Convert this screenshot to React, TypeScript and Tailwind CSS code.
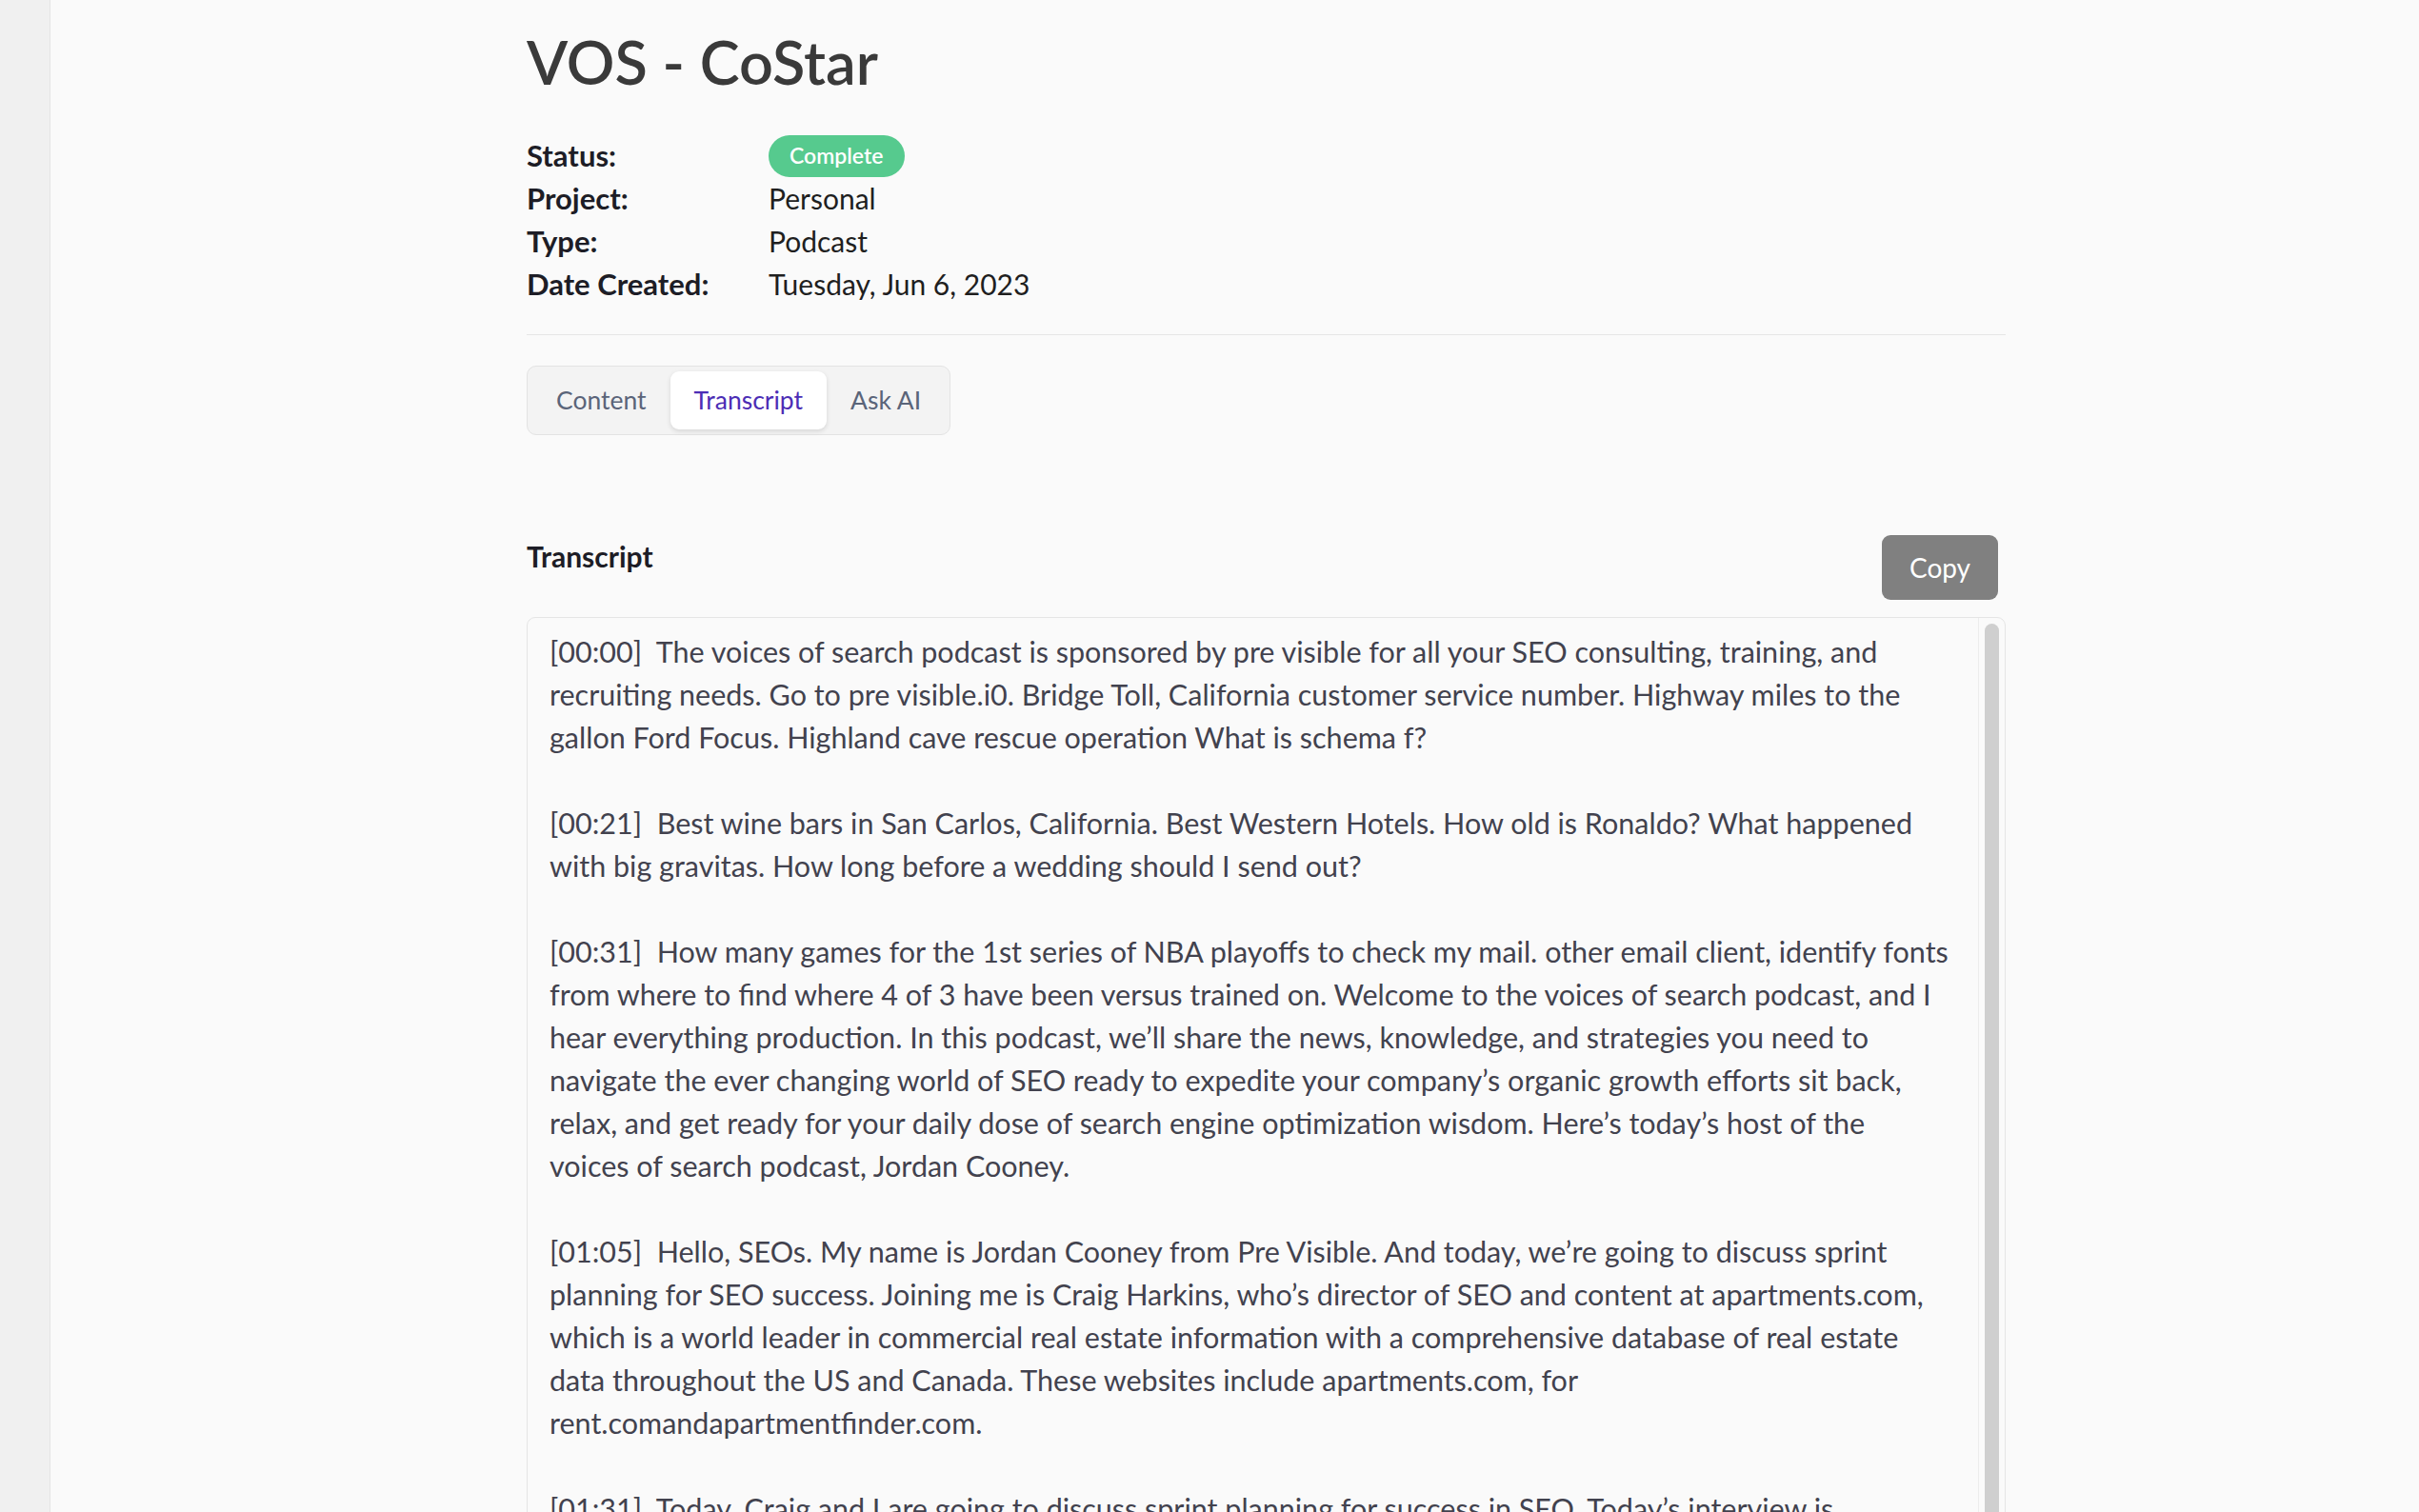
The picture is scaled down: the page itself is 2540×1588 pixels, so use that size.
import { useState } from 'react'

const meta: { label: string; value: string }[] = [
  { label: 'Project:', value: 'Personal' },
  { label: 'Type:', value: 'Podcast' },
  { label: 'Date Created:', value: 'Tuesday, Jun 6, 2023' },
]

const tabs = ['Content', 'Transcript', 'Ask AI']

const transcript: string[][] = [
  [
    '[00:00]  The voices of search podcast is sponsored by pre visible for all your SEO consulting, training, and',
    'recruiting needs. Go to pre visible.i0. Bridge Toll, California customer service number. Highway miles to the',
    'gallon Ford Focus. Highland cave rescue operation What is schema f?',
  ],
  [
    '[00:21]  Best wine bars in San Carlos, California. Best Western Hotels. How old is Ronaldo? What happened',
    'with big gravitas. How long before a wedding should I send out?',
  ],
  [
    '[00:31]  How many games for the 1st series of NBA playoffs to check my mail. other email client, identify fonts',
    'from where to find where 4 of 3 have been versus trained on. Welcome to the voices of search podcast, and I',
    'hear everything production. In this podcast, we\u2019ll share the news, knowledge, and strategies you need to',
    'navigate the ever changing world of SEO ready to expedite your company\u2019s organic growth efforts sit back,',
    'relax, and get ready for your daily dose of search engine optimization wisdom. Here\u2019s today\u2019s host of the',
    'voices of search podcast, Jordan Cooney.',
  ],
  [
    '[01:05]  Hello, SEOs. My name is Jordan Cooney from Pre Visible. And today, we\u2019re going to discuss sprint',
    'planning for SEO success. Joining me is Craig Harkins, who\u2019s director of SEO and content at apartments.com,',
    'which is a world leader in commercial real estate information with a comprehensive database of real estate',
    'data throughout the US and Canada. These websites include apartments.com, for',
    'rent.comandapartmentfinder.com.',
  ],
  [
    '[01:31]  Today, Craig and I are going to discuss sprint planning for success in SEO. Today\u2019s interview is',
    'going to be a little different. We\u2019re going to talk about how the team plans each sprint.',
  ],
]

export default function App() {
  const [tab, setTab] = useState('Transcript')

  return (
    <div
      className="flex min-h-screen bg-[#fafafa] text-[#1d1d26]"
      style={{ fontFamily: 'Lato, "Noto Sans", sans-serif' }}
    >
      <aside className="w-[53px] shrink-0 border-r border-[#e4e4e4] bg-[#f0f0f0]" />

      <main className="flex-1 pl-[500px] pt-[32px]">
        <div className="w-[1553px]">
          <h1 className="text-[63px] leading-[65px] font-semibold text-[#3a3a3a]">VOS - CoStar</h1>

          <div className="mt-[44px] border-b border-[#e6e6e6] pb-[30px]">
            <div className="flex h-[45px] items-center">
              <span className="w-[254px] text-[31px] font-bold">Status:</span>
              <span className="flex h-[44px] items-center rounded-full bg-[#56ca8e] px-[22px] text-[23px] font-semibold text-white">
                Complete
              </span>
            </div>
            {meta.map((m) => (
              <div key={m.label} className="flex h-[45px] items-center">
                <span className="w-[254px] text-[31px] font-bold">{m.label}</span>
                <span className="text-[30px] text-[#1f1f1f]">{m.value}</span>
              </div>
            ))}
          </div>

          <div className="mt-[32px] inline-flex rounded-[10px] border border-[#e3e3e3] bg-[#f3f3f3] p-[5px]">
            {tabs.map((t) => (
              <button
                key={t}
                onClick={() => setTab(t)}
                className={
                  t === tab
                    ? 'h-[61px] rounded-[9px] bg-white px-[25px] text-[26.5px] text-[#4c2db5] shadow-[0_2px_5px_rgba(0,0,0,0.12)]'
                    : 'h-[61px] rounded-[9px] px-[25px] text-[26.5px] text-[#5a6479]'
                }
              >
                {t}
              </button>
            ))}
          </div>

          <div className="mt-[105px] flex items-start justify-between pr-[8px]">
            <h2 className="text-[30px] leading-[45px] font-bold">Transcript</h2>
            <button className="h-[68px] w-[122px] rounded-[9px] bg-[#808080] text-[28px] text-white">
              Copy
            </button>
          </div>

          <div className="mt-[18px] flex h-[1100px] overflow-hidden rounded-[9px] border border-[#e5e5e5] bg-[#fafafa]">
            <div className="flex-1 pl-[23px] pt-[13px] text-[30.5px] leading-[45px] text-[#42424e]">
              {transcript.map((p, i) => (
                <div key={i} className="mb-[45px]">
                  {p.map((line, j) => (
                    <div key={j} className="whitespace-pre">
                      {line}
                    </div>
                  ))}
                </div>
              ))}
            </div>
            <div className="w-[28px] shrink-0 border-l border-[#ececec] px-[6px] pt-[6px]">
              <div className="h-full rounded-full bg-[#cfcfcf]" />
            </div>
          </div>
        </div>
      </main>
    </div>
  )
}
